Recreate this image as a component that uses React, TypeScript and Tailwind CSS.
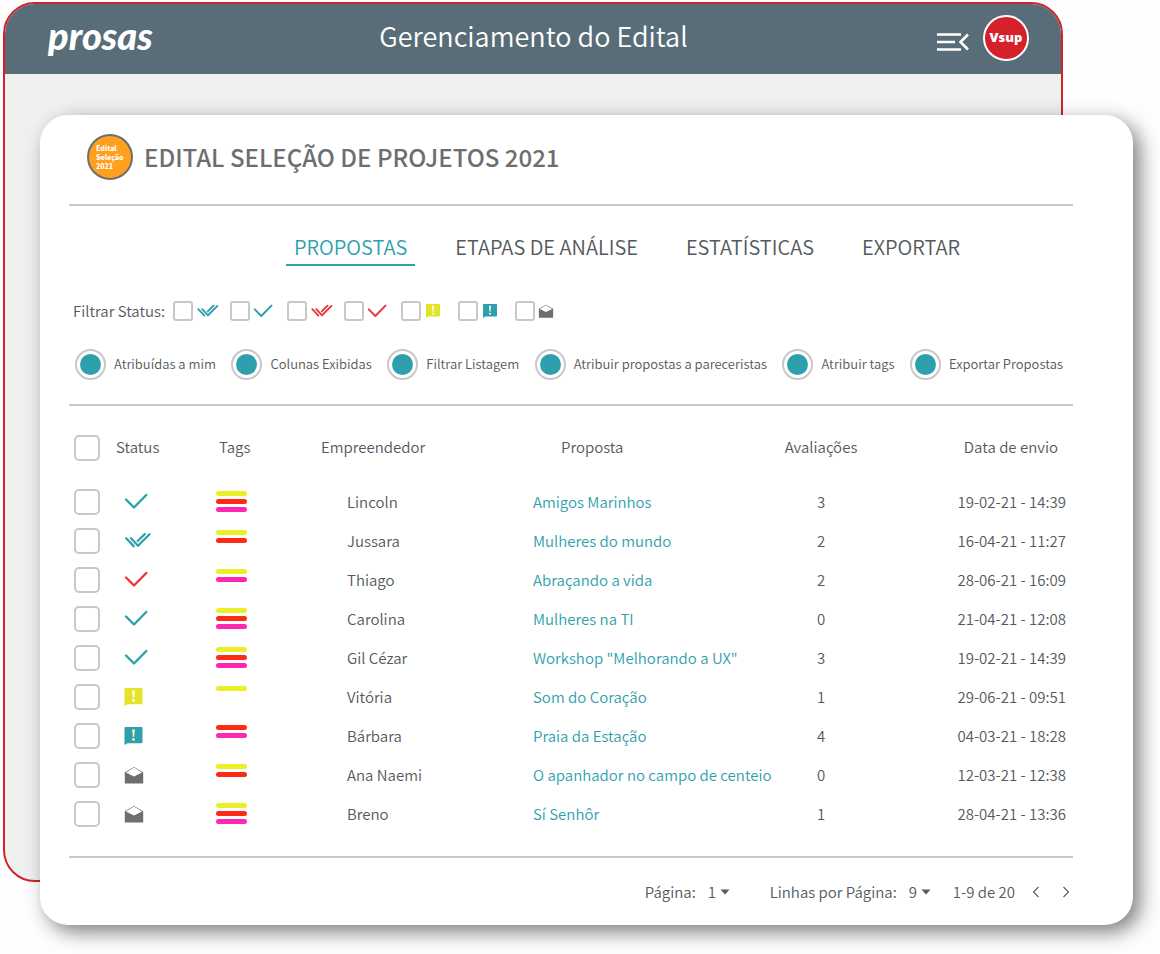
import React, { useState } from 'react'
import clsx from 'clsx'

type Status = 'check' | 'double' | 'reject' | 'doubleReject' | 'warning' | 'info' | 'open'
type Tag = 'yellow' | 'red' | 'pink'

interface Proposal {
  owner: string
  title: string
  status: Status
  tags: Tag[]
  reviews: number
  sentAt: string
}

const proposals: Proposal[] = [
  { owner: 'Lincoln', title: 'Amigos Marinhos', status: 'check', tags: ['yellow', 'red', 'pink'], reviews: 3, sentAt: '19-02-21 - 14:39' },
  { owner: 'Jussara', title: 'Mulheres do mundo', status: 'double', tags: ['yellow', 'red'], reviews: 2, sentAt: '16-04-21 - 11:27' },
  { owner: 'Thiago', title: 'Abraçando a vida', status: 'reject', tags: ['yellow', 'pink'], reviews: 2, sentAt: '28-06-21 - 16:09' },
  { owner: 'Carolina', title: 'Mulheres na TI', status: 'check', tags: ['yellow', 'red', 'pink'], reviews: 0, sentAt: '21-04-21 - 12:08' },
  { owner: 'Gil Cézar', title: 'Workshop "Melhorando a UX"', status: 'check', tags: ['yellow', 'red', 'pink'], reviews: 3, sentAt: '19-02-21 - 14:39' },
  { owner: 'Vitória', title: 'Som do Coração', status: 'warning', tags: ['yellow'], reviews: 1, sentAt: '29-06-21 - 09:51' },
  { owner: 'Bárbara', title: 'Praia da Estação', status: 'info', tags: ['red', 'pink'], reviews: 4, sentAt: '04-03-21 - 18:28' },
  { owner: 'Ana Naemi', title: 'O apanhador no campo de centeio', status: 'open', tags: ['yellow', 'red'], reviews: 0, sentAt: '12-03-21 - 12:38' },
  { owner: 'Breno', title: 'Sí Senhôr', status: 'open', tags: ['yellow', 'red', 'pink'], reviews: 1, sentAt: '28-04-21 - 13:36' },
]

const tabs = ['PROPOSTAS', 'ETAPAS DE ANÁLISE', 'ESTATÍSTICAS', 'EXPORTAR']

const actions = [
  'Atribuídas a mim',
  'Colunas Exibidas',
  'Filtrar Listagem',
  'Atribuir propostas a pareceristas',
  'Atribuir tags',
  'Exportar Propostas',
]

const filters: Status[] = ['double', 'check', 'doubleReject', 'reject', 'warning', 'info', 'open']

const statusLabels: Record<Status, string> = {
  check: 'Aprovada',
  double: 'Aprovada e confirmada',
  reject: 'Reprovada',
  doubleReject: 'Reprovada e confirmada',
  warning: 'Pendente',
  info: 'Em análise',
  open: 'Recebida',
}

const tagColors: Record<Tag, string> = {
  yellow: 'bg-[#ecef27]',
  red: 'bg-[#fb2b16]',
  pink: 'bg-[#fd27b2]',
}

function CheckMark({ color, className }: { color: string; className: string }) {
  return (
    <svg viewBox="0 0 24 17" className={className} fill="none" stroke={color} strokeWidth="2.4" strokeLinecap="round" strokeLinejoin="round">
      <path d="M2 6.5l8 8L22.3 2" />
    </svg>
  )
}

function DoubleCheckMark({ color, className }: { color: string; className: string }) {
  return (
    <svg viewBox="0 0 28 17" className={className} fill="none" stroke={color} strokeWidth="2.3" strokeLinecap="round" strokeLinejoin="round">
      <path d="M2.2 6.3l7.4 7.8M7 6.3l7 7.4L25.5 2.3M13.7 9l7.1-7" />
    </svg>
  )
}

function Bubble({ color, mark, className }: { color: string; mark: string; className: string }) {
  return (
    <svg viewBox="0 0 18 18" className={className}>
      <path d="M1 0h16a1 1 0 0 1 1 1v14.2a1 1 0 0 1-1 1H3L0 18V1a1 1 0 0 1 1-1z" fill={color} />
      <path d="M7.6 2.4h2.8L9.6 10H8.4z" fill={mark} />
      <circle cx="9" cy="12.4" r="1.3" fill={mark} />
    </svg>
  )
}

function Envelope({ className }: { className: string }) {
  return (
    <svg viewBox="0 0 20 18" className={className}>
      <path d="M.8 6.2L10 .9l9.2 5.3V17a.6.6 0 0 1-.6.6H1.4a.6.6 0 0 1-.6-.6z" fill="#6d6e70" />
      <path d="M1.9 6.5L10 1.6l8.1 4.9L10 10.4z" fill="#fff" />
    </svg>
  )
}

function StatusIcon({ status, small }: { status: Status; small?: boolean }) {
  const single = small ? 'w-5 h-3.5' : 'w-6 h-[17px]'
  const double = small ? 'w-6 h-3.5' : 'w-7 h-[17px]'
  const bubble = small ? 'w-3.5 h-3.5 ml-0.5' : 'w-[19px] h-[18px]'
  switch (status) {
    case 'check':
      return <CheckMark color="#2e9fad" className={single} />
    case 'reject':
      return <CheckMark color="#e8373a" className={single} />
    case 'double':
      return <DoubleCheckMark color="#2e9fad" className={double} />
    case 'doubleReject':
      return <DoubleCheckMark color="#e8373a" className={double} />
    case 'warning':
      return <Bubble color="#e3e32b" mark="#fff" className={bubble} />
    case 'info':
      return <Bubble color="#2e9fad" mark="#fdf8d0" className={bubble} />
    case 'open':
      return <Envelope className={small ? 'w-4 h-3.5' : 'w-5 h-[18px]'} />
  }
}

function Checkbox({ label, small }: { label: string; small?: boolean }) {
  return (
    <input
      type="checkbox"
      aria-label={label}
      className={clsx(
        'block shrink-0 appearance-none border-2 border-[#c8c8c8] bg-white checked:bg-[#2e9fad]',
        small ? 'size-5 rounded-[3px]' : 'size-[26px] rounded-[5px]'
      )}
    />
  )
}

function PageSelect({ label, options }: { label: string; options: number[] }) {
  return (
    <label className="flex items-center gap-3">
      {label}
      <span className="flex items-center">
        <select className="w-5 appearance-none bg-transparent outline-none -mr-2">
          {options.map((n) => (
            <option key={n}>{n}</option>
          ))}
        </select>
        <svg viewBox="0 0 10 6" className="w-2.5 h-1.5 pointer-events-none" fill="#54595b">
          <path d="M.5.5h9L5 5.5z" />
        </svg>
      </span>
    </label>
  )
}

function Header() {
  return (
    <header className="flex h-[70px] items-center justify-between bg-[#586d78] pl-[43px] pr-8 text-white">
      <a href="#" className="w-[84px] pb-2 font-['Liberation_Sans_Narrow','Lato',sans-serif] text-[38px] leading-9 font-black italic">prosas</a>
      <h1 className="pb-1.5 text-[27px] leading-9">Gerenciamento do Edital</h1>
      <div className="flex items-center gap-3.5 pb-0.5">
        <button aria-label="Recolher menu" className="pt-2">
          <svg viewBox="0 0 34 20" className="w-[34px] h-5" fill="none" stroke="#fff" strokeWidth="2.6">
            <path d="M2 2.5h24M2 10h18M2 17.5h24M33 2.5L25.500 10l7.500 7.500" />
          </svg>
        </button>
        <button className="size-[46px] rounded-full border-2 border-white bg-[#d6202a] font-['Open_Sans'] text-[13px] font-extrabold">
          Vsup
        </button>
      </div>
    </header>
  )
}

export default function App() {
  const [activeTab, setActiveTab] = useState(tabs[0])

  return (
    <div className="grid min-h-screen overflow-hidden bg-[#fefefe] font-['Noto_Sans_CJK_SC','Noto_Sans',sans-serif] font-[350] text-[#54595b]">
      <div className="col-start-1 row-start-1 ml-[3px] mt-0.5 mr-[97px] mb-[72px] overflow-hidden rounded-[32px] border-2 border-[#d6202a] bg-[#eff1f0]">
        <Header />
      </div>

      <main className="z-10 col-start-1 row-start-1 ml-10 mt-[115px] mr-[27px] mb-[29px] rounded-[28px] bg-white pl-[29px] pr-[60px] shadow-[7px_7px_20px_rgba(0,0,0,0.5)]">
        <div className="flex items-center gap-[11px] border-b-2 border-[#c8c8c8] pt-[19px] pb-6 pl-[18px]">
          <div className="flex size-[46px] items-center rounded-full border-2 border-[#6d6e70] bg-[#ffa01e] pl-[7px] text-[7px] leading-[9px] font-black text-white">
            Edital<br />Seleção<br />2021
          </div>
          <h2 className="text-[24px] leading-8 font-medium text-[#6d6e70]">EDITAL SELEÇÃO DE PROJETOS 2021</h2>
        </div>

        <nav className="flex justify-center gap-8 pt-[25px] pl-[112px]">
          {tabs.map((tab) => (
            <button
              key={tab}
              onClick={() => setActiveTab(tab)}
              className={clsx(
                'border-b-2 px-2 pb-px text-[20px] leading-8',
                tab === activeTab ? 'border-[#2e9fad] text-[#2e9fad]' : 'border-transparent'
              )}
            >
              {tab}
            </button>
          ))}
        </nav>

        <div className="flex items-center pt-[33px] pl-1 text-[15px] leading-6">
          <span className="w-[100px]">Filtrar Status:</span>
          {filters.map((status) => (
            <label key={status} className="flex w-[57px] items-center gap-[3px]">
              <Checkbox small label={statusLabels[status]} />
              <StatusIcon small status={status} />
            </label>
          ))}
        </div>

        <div className="flex items-center justify-between border-b-2 border-[#c8c8c8] pt-[25px] pr-2.5 pb-6 pl-1.5 text-[13px] leading-8">
          {actions.map((action) => (
            <button key={action} className="flex items-center gap-2">
              <span className="flex size-[31px] items-center justify-center rounded-full border-2 border-[#c8c8c8]">
                <span className="size-[21px] rounded-full bg-[#2e9fad]" />
              </span>
              {action}
            </button>
          ))}
        </div>

        <table className="mt-[23px] w-full table-fixed text-left text-[15px] leading-6">
          <thead>
            <tr className="h-[53px] align-top [&>th]:font-[350]">
              <th className="w-[47px] pl-[5px] pt-1.5"><Checkbox label="Selecionar todas" /></th>
              <th className="w-[100px] pt-1.5">Status</th>
              <th className="w-[105px] pt-1.5 pl-[3px]">Tags</th>
              <th className="w-[212px] pt-1.5">Empreendedor</th>
              <th className="w-[235px] pt-1.5 pl-7">Proposta</th>
              <th className="w-[106px] pt-1.5 text-center">Avaliações</th>
              <th className="pt-1.5 pr-[15px] text-right">Data de envio</th>
            </tr>
          </thead>
          <tbody>
            {proposals.map((p) => (
              <tr key={p.owner} className="h-[39px]">
                <td className="pl-[5px]"><Checkbox label={`Selecionar ${p.title}`} /></td>
                <td className="pl-2"><StatusIcon status={p.status} /></td>
                <td>
                  <div className="flex h-[21px] flex-col gap-[3px]">
                    {p.tags.map((tag) => (
                      <span key={tag} className={clsx('h-[5px] w-[31px] rounded-full', tagColors[tag])} />
                    ))}
                  </div>
                </td>
                <td className="pl-[26px]">{p.owner}</td>
                <td><a href="#" className="whitespace-nowrap text-[#2e9fad]">{p.title}</a></td>
                <td className="text-center">{p.reviews}</td>
                <td className="pr-[7px] text-right">{p.sentAt}</td>
              </tr>
            ))}
          </tbody>
        </table>

        <div className="mt-[23px] flex items-center justify-end border-t-2 border-[#c8c8c8] pt-[22px] pb-[21px] text-[15px] leading-6">
          <PageSelect label="Página:" options={[1, 2, 3]} />
          <div className="ml-10"><PageSelect label="Linhas por Página:" options={[9, 18, 27]} /></div>
          <span className="ml-[22px]">1-9 de 20</span>
          <button aria-label="Página anterior" className="ml-4">
            <svg viewBox="0 0 10 12" className="w-2.5 h-3" fill="none" stroke="#54595b" strokeWidth="1.1"><path d="M7.5 1L2.500 6l5 5" /></svg>
          </button>
          <button aria-label="Próxima página" className="ml-5 mr-0.5">
            <svg viewBox="0 0 10 12" className="w-2.5 h-3" fill="none" stroke="#54595b" strokeWidth="1.1"><path d="M2.5 1l5 5-5 5" /></svg>
          </button>
        </div>
      </main>
    </div>
  )
}
